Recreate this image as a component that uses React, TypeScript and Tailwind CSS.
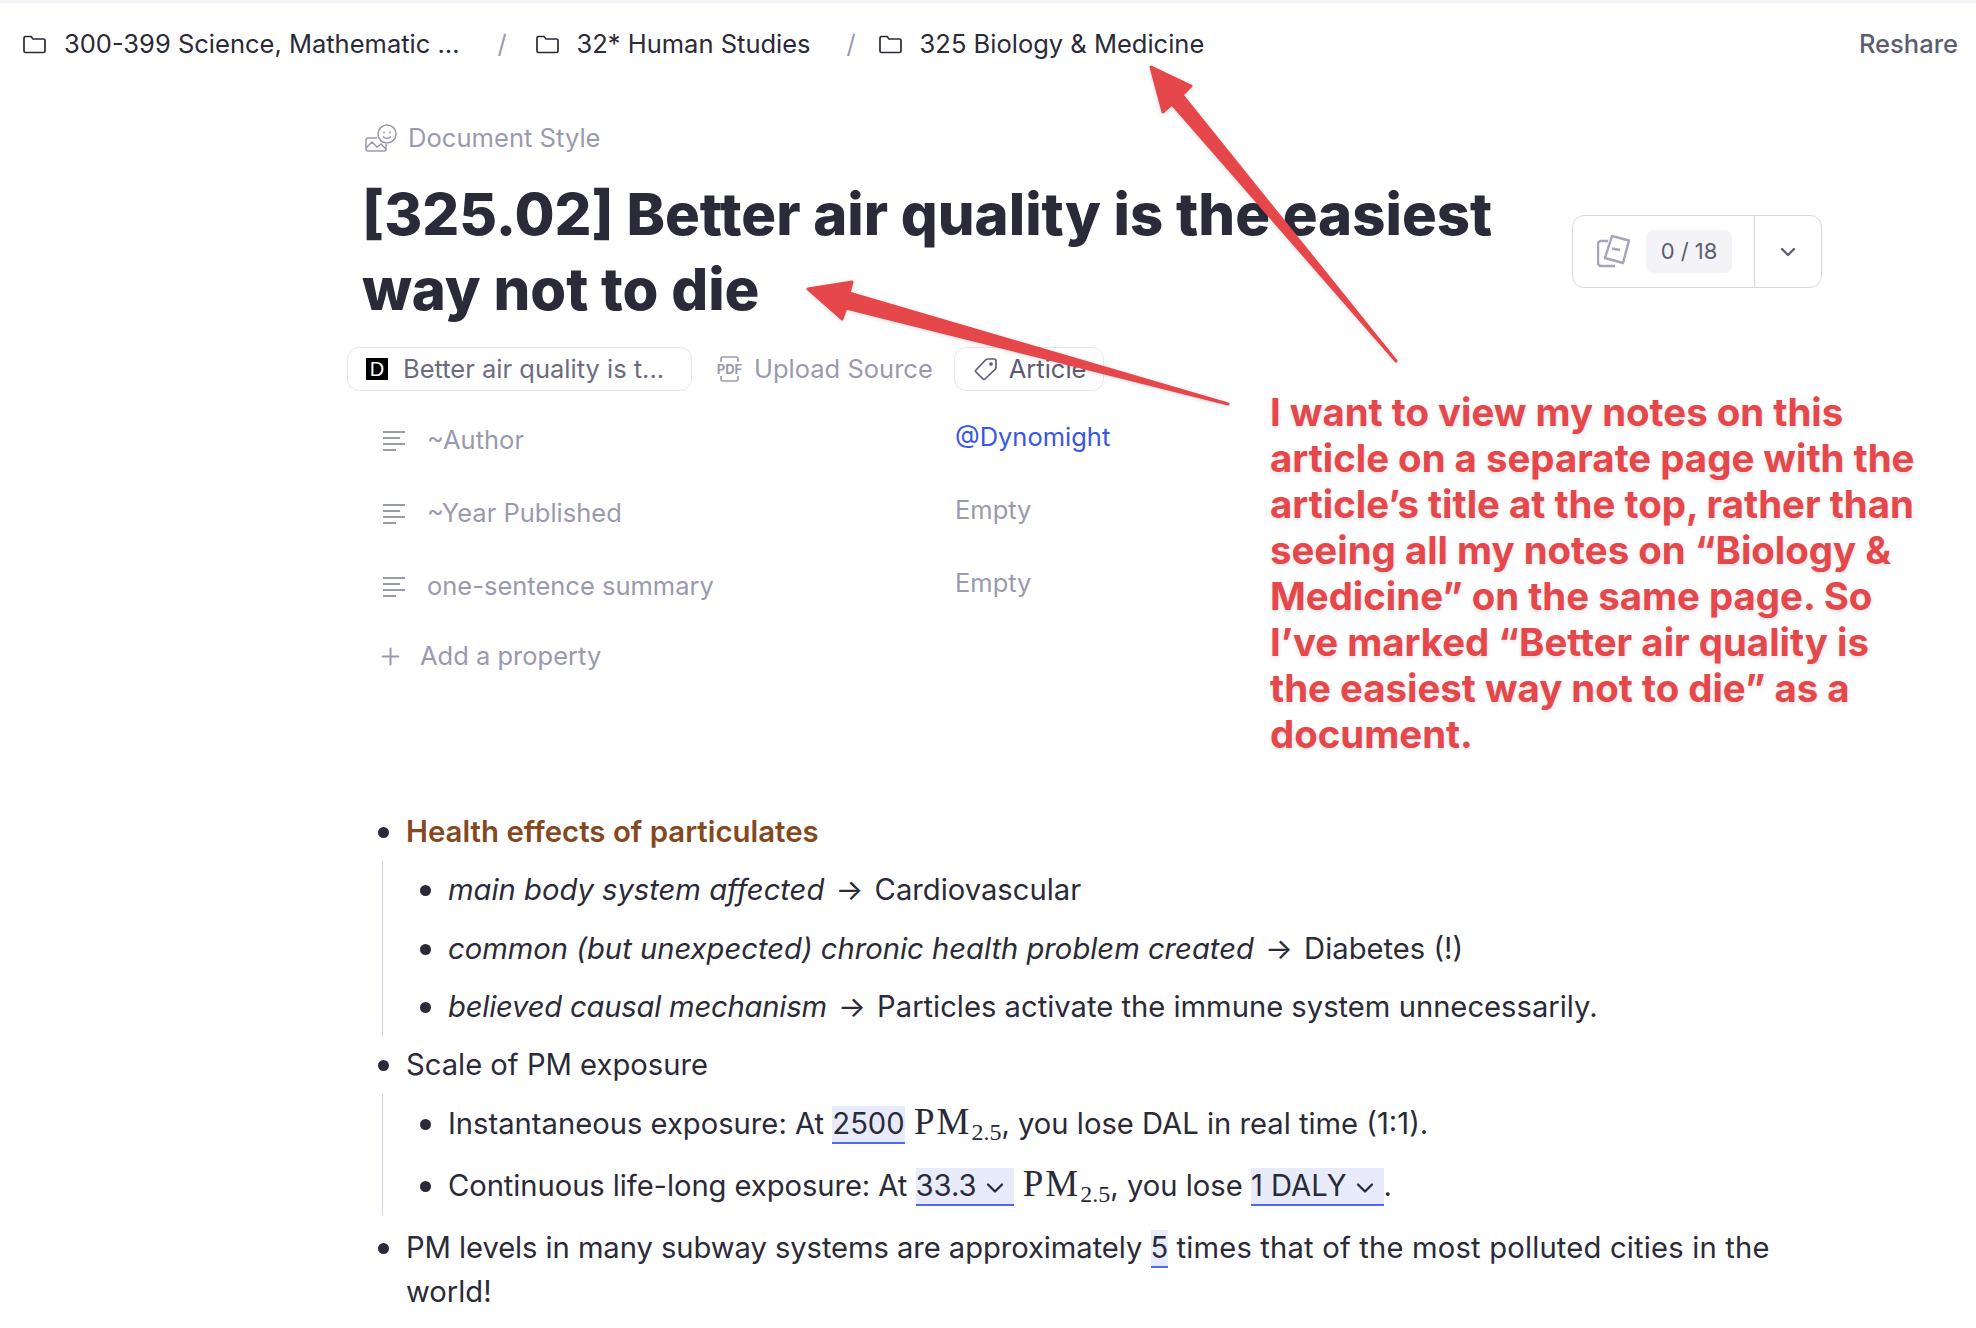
import { ChevronDown, Plus } from "lucide-react";
import type { ReactNode } from "react";

const crumbs = [
  { name: "300-399 Science, Mathematic ...", sep: "" },
  { name: "32* Human Studies", sep: "w-[76px] pl-[38px]" },
  { name: "325 Biology & Medicine", sep: "w-[68px] pl-[36px]" },
];

const properties = [
  { label: "~Author", value: "@Dynomight", linked: true },
  { label: "~Year Published", value: "Empty", linked: false },
  { label: "one-sentence summary", value: "Empty", linked: false },
];

const note = [
  "I want to view my notes on this",
  "article on a separate page with the",
  "article’s title at the top, rather than",
  "seeing all my notes on “Biology &",
  "Medicine” on the same page. So",
  "I’ve marked “Better air quality is",
  "the easiest way not to die” as a",
  "document.",
];

function FolderIcon() {
  return (
    <svg width="23" height="19" viewBox="0 0 23 19" fill="none" stroke="#2a2a38" strokeWidth="1.7" className="mr-[18px]">
      <path d="M1 3a1.500 1.500 0 0 1 1.500-1.500h5.500l2 2.500h10.500a1.500 1.500 0 0 1 1.500 1.500v10.500a1.500 1.500 0 0 1-1.500 1.500h-18a1.500 1.500 0 0 1-1.500-1.500z" />
    </svg>
  );
}

function LinesIcon() {
  return (
    <svg width="22" height="20" viewBox="0 0 22 20" fill="none" stroke="#9a9aae" strokeWidth="2">
      <path d="M0 1h22M0 7h17M0 13h22M0 19h13" />
    </svg>
  );
}

function Blank({ children }: { children: ReactNode }) {
  return (
    <span className="border-b-2 border-[#4f6ae8] bg-[#e8ebfb] pb-[1px]">{children}</span>
  );
}

function Caret() {
  return <ChevronDown className="-my-[8px] mr-[5px] ml-[4px] inline size-[28px] align-middle" strokeWidth={2} />;
}

function Pm() {
  return (
    <span className="ml-[1px] font-['Liberation_Serif',serif] text-[37px] leading-none tracking-[2px]">
      PM<sub className="text-[24px] leading-none tracking-normal">2.5</sub>
    </span>
  );
}

function Arrow() {
  return <span className="mx-[3px]">→</span>;
}

function Bullet({ nested, children }: { nested?: boolean; children: ReactNode }) {
  return (
    <div className={`flex items-start ${nested ? "pl-[20px]" : ""}`}>
      <span className="mt-[17px] mr-[17px] size-[11px] shrink-0 rounded-full bg-[#2a2a38]" />
      <div>{children}</div>
    </div>
  );
}

export default function App() {
  return (
    <div className="relative h-[1328px] w-[1976px] overflow-hidden bg-white font-['Inter',sans-serif] text-[#2a2a38]">
      <div className="h-[3px] bg-[#f3f3f8]" />

      <header className="flex h-[82px] items-center justify-between pr-[18px] pl-[23px] text-[25.500px]">
        <div className="flex items-center">
          {crumbs.map((c, i) => (
            <div key={c.name} className="flex items-center">
              {i > 0 && <span className={`${c.sep} text-[#9a9aae]`}>/</span>}
              <FolderIcon />
              <span>{c.name}</span>
            </div>
          ))}
        </div>
        <span className="font-medium text-[#5d5d72]">Reshare</span>
      </header>

      <main className="pt-[30px] pl-[347px]">
        <div className="flex h-[46px] items-center gap-[11px] pl-[18px] text-[25.600px] text-[#9a9aae]">
          <svg width="32" height="28" viewBox="0 0 32 28" fill="none" stroke="#9a9aae" strokeWidth="1.500">
            <circle cx="22" cy="10" r="9" />
            <path d="M19 7.500v2M25 7.500v2M18 12.500c2 2.500 6 2.500 8 0" />
            <path d="M12 14H3a2 2 0 0 0-2 2v9a2 2 0 0 0 2 2h16a2 2 0 0 0 2-2v-5M1 24l6-6 5 5 4-3 5 5" />
          </svg>
          <span>Document Style</span>
        </div>

        <div className="flex items-start">
          <h1 className="mt-[16px] w-[1225px] pl-[15px] text-[58px] leading-[75px] font-extrabold">
            [325.02] Better air quality is the easiest way not to die
          </h1>
          <div className="mt-[54px] flex h-[73px] w-[250px] items-center rounded-[12px] border border-[#d8d8e2]">
            <div className="flex flex-1 items-center gap-[15px] pl-[24px]">
              <svg width="34" height="34" viewBox="0 0 34 34" fill="none" stroke="#a5a5b8" strokeWidth="2.400" strokeLinejoin="round">
                <path d="M11 6H4a3 3 0 0 0-3 3v19a3 3 0 0 0 3 3h14" />
                <path d="M15 1l17 4.500-6 22.500-18-5z" />
                <path d="M15 13.500l8 1.500" />
              </svg>
              <span className="flex h-[43px] w-[86px] items-center justify-center rounded-[8px] bg-[#f3f3f8] text-[22px] text-[#5d5d72]">
                0 / 18
              </span>
            </div>
            <div className="flex h-full w-[67px] items-center justify-center border-l border-[#d8d8e2]">
              <ChevronDown className="size-[24px] text-[#5d5d72]" strokeWidth={2.4} />
            </div>
          </div>
        </div>

        <div className="mt-[20px] flex h-[44px] items-center text-[25.500px] text-[#6c6c80]">
          <div className="flex h-full w-[345px] items-center rounded-[12px] border border-[#e6e6ee] pl-[18px]">
            <span className="mr-[15px] flex size-[22px] items-center justify-center bg-black font-['Liberation_Sans',sans-serif] text-[20px] text-white">
              D
            </span>
            Better air quality is t...
          </div>
          <div className="ml-[24px] flex items-center gap-[11px] text-[#9a9aae]">
            <svg width="27" height="26" viewBox="0 0 27 26" fill="none" stroke="#9a9aae" strokeWidth="1.600">
              <path d="M5 6V3a2 2 0 0 1 2-2h13a2 2 0 0 1 2 2v3M5 20v3a2 2 0 0 0 2 2h13a2 2 0 0 0 2-2v-3" />
              <text x="13.500" y="17.500" textAnchor="middle" fontSize="13" fontWeight="700" fill="#9a9aae" stroke="none">
                PDF
              </text>
            </svg>
            <span>Upload Source</span>
          </div>
          <div className="ml-[21px] flex h-full w-[150px] items-center gap-[12px] rounded-[12px] border border-[#e6e6ee] pl-[19px] text-[#5d5d72]">
            <svg width="23" height="24" viewBox="0 0 23 24" fill="none" stroke="#5d5d72" strokeWidth="1.700" strokeLinejoin="round">
              <path d="M2 13L12 2.500Q13 2 14 2H20Q22 2 22 4V10Q22 11 21.500 12L11 22Q10 23 9 22L2 15Q1 14 2 13Z" />
              <circle cx="17" cy="7" r="1" />
            </svg>
            Article
          </div>
        </div>

        <div className="mt-[13px] pl-[36px] text-[25.500px] text-[#9a9aae]">
          {properties.map((p) => (
            <div key={p.label} className="flex h-[73px] items-center">
              <LinesIcon />
              <span className="ml-[22px] w-[528px]">{p.label}</span>
              <span className={`-mt-[7px] ${p.linked ? "text-[#3a56e4]" : ""}`}>{p.value}</span>
            </div>
          ))}
          <div className="flex h-[67px] items-center text-[#9a9aae]">
            <Plus className="ml-[-6px] size-[27px]" strokeWidth={1.8} />
            <span className="ml-[16px]">Add a property</span>
          </div>
        </div>

        <div className="mt-[120px] pl-[31px] text-[29.200px] leading-[44px]">
          <div className="flex flex-col gap-[7px]">
            <Bullet>
              <span className="text-[29.400px] font-semibold text-[#85491f]">Health effects of particulates</span>
            </Bullet>
            <div className="ml-[4px] flex flex-col gap-[14.500px] border-l border-[#d0d0dd] py-[7px] pl-[17px]">
              <Bullet nested>
                <i>main body system affected</i> <Arrow /> Cardiovascular
              </Bullet>
              <Bullet nested>
                <i>common (but unexpected) chronic health problem created</i> <Arrow /> Diabetes (!)
              </Bullet>
              <Bullet nested>
                <i className="tracking-[-0.2px]">believed causal mechanism</i> <Arrow /> Particles activate the immune system unnecessarily.
              </Bullet>
            </div>
            <Bullet>Scale of PM exposure</Bullet>
            <div className="ml-[4px] flex flex-col gap-[18px] border-l border-[#d0d0dd] pt-[8px] pb-[7px] pl-[17px]">
              <Bullet nested>
                Instantaneous exposure: At <Blank>2500</Blank> <Pm />, you lose DAL in real time (1:1).
              </Bullet>
              <Bullet nested>
                <span className="tracking-[-0.07px]">Continuous life-long exposure: At</span>{" "}
                <Blank>
                  33.3
                  <Caret />
                </Blank>{" "}
                <Pm />, you lose{" "}
                <Blank>
                  1 DALY
                  <Caret />
                </Blank>
                .
              </Bullet>
            </div>
            <div className="mt-[4px]">
              <Bullet>
                <span className="tracking-[-0.07px]">PM levels in many subway systems are approximately</span>{" "}
                <Blank>5</Blank>{" "}
                <span className="tracking-[0.18px]">times that of the most polluted cities in the</span>
                <br />
                world!
              </Bullet>
            </div>
          </div>
        </div>
      </main>

      {/* red markup drawn over the screenshot */}
      <svg
        className="absolute top-0 left-0 drop-shadow-[0_1px_2px_rgba(0,0,0,0.15)]"
        width="1976"
        height="1328"
        fill="#e5474b"
        stroke="#e5474b"
        strokeWidth="3"
        strokeLinejoin="round"
      >
        <path d="M1151 67L1191 86L1182 95L1396 361L1172 104L1163 112Z" />
        <path d="M808 289L852 282L849 293L1228 404L846 308L842 319Z" />
      </svg>
      <div className="absolute top-[389px] left-[1270px] text-[38.400px] leading-[46px] font-bold whitespace-nowrap text-[#e5474b] [text-shadow:0_2px_4px_rgba(0,0,0,0.12)]">
        {note.map((line) => (
          <div key={line}>{line}</div>
        ))}
      </div>
    </div>
  );
}
